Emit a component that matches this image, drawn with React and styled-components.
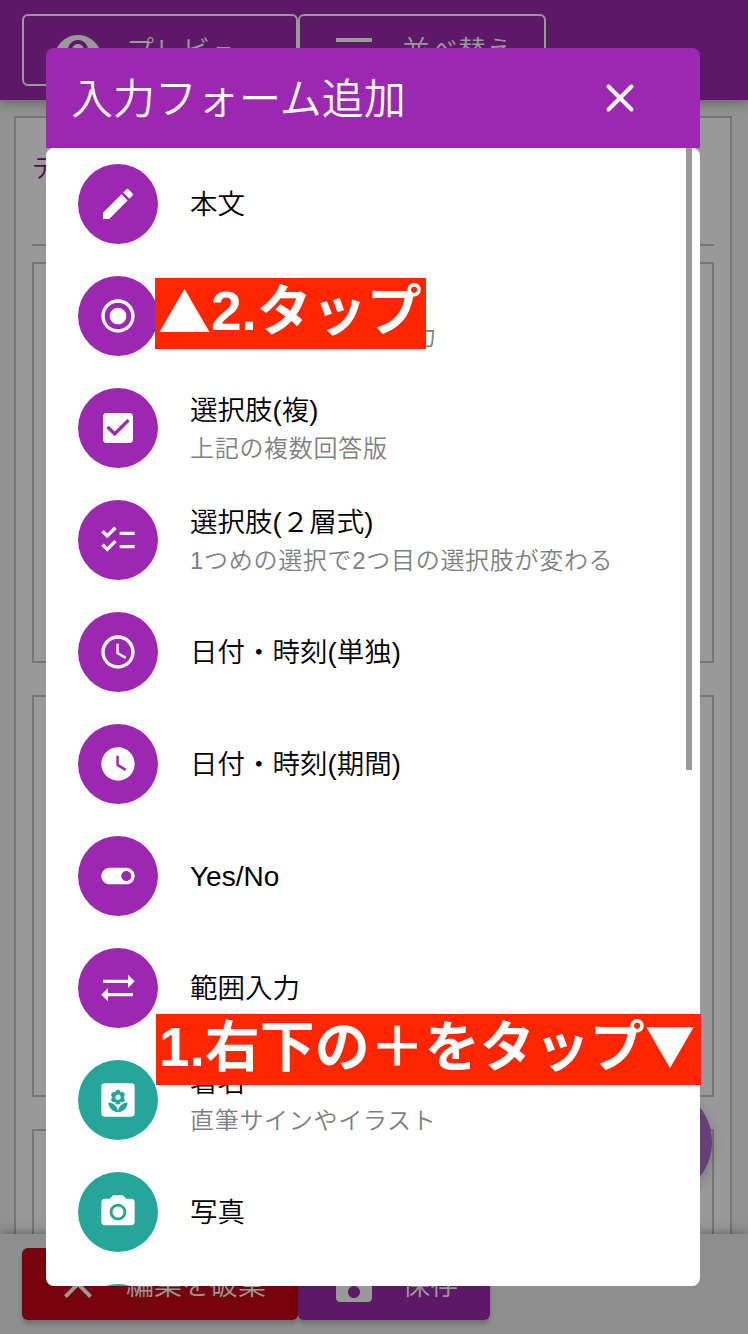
import React from "react";
import styled, { createGlobalStyle } from "styled-components";

const PURPLE = "#9c27b0";
const TEAL = "#26a69a";

const GlobalStyle = createGlobalStyle`
  * { box-sizing: border-box; }
  body {
    margin: 0;
    background: #929292;
    font-family: "Liberation Sans", "Noto Sans CJK JP", sans-serif;
    font-weight: 350;
    -webkit-font-smoothing: antialiased;
  }
`;

const Screen = styled.div`
  position: relative;
  display: flex;
  flex-direction: column;
  width: 748px;
  height: 1334px;
  overflow: hidden;
`;

const TopBar = styled.header`
  display: flex;
  flex: none;
  height: 100px;
  padding: 14px 22px;
  background: #5d1867;
  box-shadow: 0 4px 8px rgba(0, 0, 0, 0.2), 0 2px 18px rgba(0, 0, 0, 0.12);
  z-index: 1;
`;

const BarButton = styled.button`
  display: flex;
  align-items: center;
  gap: 24px;
  width: ${(p) => p.$width}px;
  height: 72px;
  padding: 0 0 0 ${(p) => (p.$outlined ? 30 : 32)}px;
  border: ${(p) => (p.$outlined ? "2px solid #999" : "0")};
  border-radius: 6px;
  background: ${(p) => p.$color || "transparent"};
  box-shadow: ${(p) => (p.$outlined ? "none" : "0 4px 4px rgba(0, 0, 0, 0.2)")};
  color: #999;
  font: inherit;
  font-size: 28px;
  white-space: nowrap;

  svg {
    flex: none;
    width: 48px;
    height: 48px;
    fill: currentColor;
  }
`;

const BarLabel = styled.span`
  padding-bottom: 2px;
`;

const Page = styled.main`
  flex: 1;
  min-height: 0;
  padding: 16px 16px 0 14px;
  overflow: hidden;
`;

const Paper = styled.section`
  display: flex;
  flex-direction: column;
  height: 1300px;
  padding: 0 16px;
  border: 2px solid #767676;
  background: #999;
`;

const PageTitle = styled.div`
  flex: none;
  height: 128px;
  margin-bottom: 16px;
  padding: 30px 0 0;
  border-bottom: 2px solid #767676;
  color: #49104f;
  font-size: 25px;
`;

const Card = styled.div`
  flex: none;
  height: 401.4px;
  margin-bottom: 32px;
  border: 2px solid #767676;
`;

const BottomBar = styled.footer`
  display: flex;
  flex: none;
  height: 100px;
  padding: 14px 22px;
  background: #8e8e8e;
  box-shadow: 0 -2px 8px rgba(0, 0, 0, 0.24), 0 -6px 16px rgba(0, 0, 0, 0.06);
  z-index: 1;
`;

const Fab = styled.div`
  position: absolute;
  left: 600px;
  top: 1086px;
  width: 112px;
  height: 112px;
  border-radius: 50%;
  background: #683f79;
  box-shadow: 0 4px 12px rgba(0, 0, 0, 0.22);
`;

const Dialog = styled.div`
  position: absolute;
  z-index: 2;
  left: 46px;
  top: 48px;
  display: flex;
  flex-direction: column;
  width: 654px;
  height: 1238px;
`;

const DialogHeader = styled.div`
  display: flex;
  flex: none;
  align-items: center;
  justify-content: space-between;
  height: 100px;
  padding: 0 60px 0 25px;
  border-radius: 8px 8px 0 0;
  background: ${PURPLE};
  color: #fff;
`;

const DialogTitle = styled.h1`
  margin: 0;
  padding-top: 3px;
  font-size: 42px;
  font-weight: 350;
  line-height: 60px;
`;

const CloseIcon = styled.svg`
  width: 40px;
  height: 40px;
  fill: none;
  stroke: #fff;
  stroke-width: 4;
  stroke-linecap: round;
`;

const DialogBody = styled.div`
  display: flex;
  flex: 1;
  min-height: 0;
  justify-content: space-between;
  overflow: hidden;
  border-radius: 8px;
  background: #fff;
`;

const List = styled.ul`
  flex: 1;
  margin: 0;
  padding: 0;
  list-style: none;
`;

const ScrollThumb = styled.div`
  width: 6px;
  height: 622px;
  margin-right: 8px;
  background: #999;
`;

const Row = styled.li`
  display: flex;
  align-items: center;
  gap: 32px;
  height: 112px;
  padding-left: 32px;
`;

const Avatar = styled.span`
  display: flex;
  flex: none;
  align-items: center;
  justify-content: center;
  width: 80px;
  height: 80px;
  border-radius: 50%;
  background: ${(p) => p.$color};

  svg {
    width: 40px;
    height: 40px;
    fill: #fff;
  }
`;

const RowText = styled.div`
  display: flex;
  flex-direction: column;
  padding-top: 2px;
  white-space: nowrap;
`;

const Primary = styled.span`
  color: #000;
  font-size: ${(p) => (p.$latin ? 28 : 27.5)}px;
  line-height: 40px;
`;

const Secondary = styled.span`
  color: #808080;
  font-size: 24px;
  letter-spacing: 0.7px;
  line-height: 36px;
`;

const Callout = styled.div`
  position: absolute;
  z-index: 3;
  left: ${(p) => p.$x}px;
  top: ${(p) => p.$y}px;
  width: ${(p) => p.$width}px;
  height: 71px;
  padding-left: ${(p) => p.$inset}px;
  overflow: hidden;
  background: #ff2600;
  color: #fff;
  font-size: 55px;
  font-weight: 700;
  line-height: 67px;
  white-space: nowrap;
`;

const Triangle = styled.span`
  font-family: "Noto Sans CJK JP", sans-serif;
  font-size: ${(p) => p.$size}px;
  line-height: 1;
  vertical-align: ${(p) => p.$shift || 0}px;
`;

const ICONS = {
  edit: "M3 17.25V21h3.75L17.81 9.94l-3.75-3.75L3 17.25zM20.71 7.04c.39-.39.39-1.02 0-1.41l-2.34-2.34c-.39-.39-1.02-.39-1.41 0l-1.83 1.83 3.75 3.75 1.83-1.83z",
  radio: "M12 7c-2.76 0-5 2.24-5 5s2.24 5 5 5 5-2.24 5-5-2.24-5-5-5zm0-5C6.48 2 2 6.48 2 12s4.48 10 10 10 10-4.48 10-10S17.52 2 12 2zm0 18c-4.42 0-8-3.58-8-8s3.58-8 8-8 8 3.58 8 8-3.58 8-8 8z",
  checkbox: "M19 3H5c-1.11 0-2 .9-2 2v14c0 1.1.89 2 2 2h14c1.11 0 2-.9 2-2V5c0-1.1-.89-2-2-2zm-9 14l-5-5 1.41-1.41L10 14.17l7.59-7.59L19 8l-9 9z",
  checklist: "M22 7h-9v2h9V7zm0 8h-9v2h9v-2zM5.54 11L2 7.46l1.41-1.41 2.12 2.12 4.24-4.24 1.41 1.41L5.54 11zm0 8L2 15.46l1.41-1.41 2.12 2.12 4.24-4.24 1.41 1.41L5.54 19z",
  clock: "M11.99 2C6.47 2 2 6.48 2 12s4.47 10 9.99 10C17.52 22 22 17.52 22 12S17.52 2 11.99 2zM12 20c-4.42 0-8-3.58-8-8s3.58-8 8-8 8 3.58 8 8-3.58 8-8 8zm.5-13H11v6l5.25 3.15.75-1.23-4.5-2.67z",
  clockFilled: "M12 2C6.5 2 2 6.5 2 12s4.5 10 10 10 10-4.5 10-10S17.5 2 12 2zm4.2 14.2L11 13V7h1.5v5.2l4.5 2.7-.8 1.3z",
  toggle: "M17 7H7c-2.76 0-5 2.24-5 5s2.24 5 5 5h10c2.76 0 5-2.24 5-5s-2.24-5-5-5zm0 8c-1.66 0-3-1.34-3-3s1.34-3 3-3 3 1.34 3 3-1.34 3-3 3z",
  arrows: "M22 8l-4-4v3H3v2h15v3l4-4zM2 16l4 4v-3h15v-2H6v-3l-4 4z",
  florist: "M12 22c4.97 0 9-4.03 9-9-4.97 0-9 4.03-9 9zM5.6 10.25c0 1.38 1.12 2.5 2.5 2.5.53 0 1.01-.16 1.42-.44l-.02.19c0 1.38 1.12 2.5 2.5 2.5s2.5-1.12 2.5-2.5l-.02-.19c.4.28.89.44 1.42.44 1.38 0 2.5-1.12 2.5-2.5 0-1-.59-1.85-1.43-2.25.84-.4 1.43-1.25 1.43-2.25 0-1.38-1.12-2.5-2.5-2.5-.53 0-1.01.16-1.42.44l.02-.19C14.5 2.12 13.38 1 12 1S9.5 2.12 9.5 3.5l.02.19c-.4-.28-.89-.44-1.42-.44-1.38 0-2.5 1.12-2.5 2.5 0 1 .59 1.85 1.43 2.25-.84.4-1.43 1.25-1.43 2.25zM12 5.5c1.38 0 2.5 1.12 2.5 2.5s-1.12 2.5-2.5 2.5S9.5 9.38 9.5 8s1.12-2.5 2.5-2.5zM3 13c0 4.97 4.03 9 9 9 0-4.97-4.03-9-9-9z",
  camera: "M9 2L7.17 4H4c-1.1 0-2 .9-2 2v12c0 1.1.9 2 2 2h16c1.1 0 2-.9 2-2V6c0-1.1-.9-2-2-2h-3.17L15 2H9zm3 15c-2.76 0-5-2.24-5-5s2.24-5 5-5 5 2.24 5 5-2.24 5-5 5z",
  eye: "M12 4.5C7 4.5 2.73 7.61 1 12c1.73 4.39 6 7.5 11 7.5s9.27-3.11 11-7.5c-1.73-4.39-6-7.5-11-7.5zM12 17c-2.76 0-5-2.24-5-5s2.24-5 5-5 5 2.24 5 5-2.24 5-5 5zm0-8c-1.66 0-3 1.34-3 3s1.34 3 3 3 3-1.34 3-3-1.34-3-3-3z",
  menu: "M3 18h18v-2H3v2zm0-5h18v-2H3v2zm0-7v2h18V6H3z",
  close: "M19 6.41L17.59 5 12 10.59 6.41 5 5 6.41 10.59 12 5 17.59 6.41 19 12 13.41 17.59 19 19 17.59 13.41 12z",
  save: "M17 3H5c-1.11 0-2 .9-2 2v14c0 1.1.89 2 2 2h14c1.1 0 2-.9 2-2V7l-4-4zm-5 16c-1.66 0-3-1.34-3-3s1.34-3 3-3 3 1.34 3 3-1.34 3-3 3zm3-10H5V5h10v4z",
};

function Icon({ name }) {
  if (name === "flower") {
    return (
      <svg viewBox="0 0 24 24">
        <rect x="2" y="2" width="20" height="20" rx="2" />
        <path d={ICONS.florist} fill={TEAL} transform="translate(4.32 5.16) scale(0.64)" />
      </svg>
    );
  }
  return (
    <svg viewBox="0 0 24 24">
      <path d={ICONS[name]} />
      {name === "camera" && <circle cx="12" cy="12" r="3.3" />}
    </svg>
  );
}

const ITEMS = [
  { icon: "edit", title: "本文" },
  { icon: "radio", title: "選択肢(単)", note: "選択肢から一つを入力" },
  { icon: "checkbox", title: "選択肢(複)", note: "上記の複数回答版" },
  { icon: "checklist", title: "選択肢(２層式)", note: "1つめの選択で2つ目の選択肢が変わる" },
  { icon: "clock", title: "日付・時刻(単独)" },
  { icon: "clockFilled", title: "日付・時刻(期間)" },
  { icon: "toggle", title: "Yes/No", latin: true },
  { icon: "arrows", title: "範囲入力" },
  { icon: "flower", title: "署名", note: "直筆サインやイラスト", color: TEAL },
  { icon: "camera", title: "写真", color: TEAL },
  { icon: "edit", title: "", color: TEAL },
];

export default function App() {
  return (
    <Screen>
      <GlobalStyle />
      <TopBar>
        <BarButton $outlined $width={276}>
          <Icon name="eye" />
          <BarLabel>プレビュー</BarLabel>
        </BarButton>
        <BarButton $outlined $width={248}>
          <Icon name="menu" />
          <BarLabel>並べ替え</BarLabel>
        </BarButton>
      </TopBar>
      <Page>
        <Paper>
          <PageTitle>デザイン</PageTitle>
          <Card />
          <Card />
          <Card />
        </Paper>
      </Page>
      <Fab />
      <BottomBar>
        <BarButton $width={276} $color="#76020d">
          <Icon name="close" />
          <BarLabel>編集を破棄</BarLabel>
        </BarButton>
        <BarButton $width={192} $color="#5d1867">
          <Icon name="save" />
          <BarLabel>保存</BarLabel>
        </BarButton>
      </BottomBar>

      <Dialog role="dialog">
        <DialogHeader>
          <DialogTitle>入力フォーム追加</DialogTitle>
          <CloseIcon viewBox="0 0 40 40">
            <path d="M8.5 8.5l23 23M31.5 8.5l-23 23" />
          </CloseIcon>
        </DialogHeader>
        <DialogBody>
          <List>
            {ITEMS.map((item, i) => (
              <Row key={i}>
                <Avatar $color={item.color || PURPLE}>
                  <Icon name={item.icon} />
                </Avatar>
                <RowText>
                  <Primary $latin={item.latin}>{item.title}</Primary>
                  {item.note && <Secondary>{item.note}</Secondary>}
                </RowText>
              </Row>
            ))}
          </List>
          <ScrollThumb />
        </DialogBody>
      </Dialog>

      <Callout $x={155} $y={278} $width={271} $inset={3}>
        <Triangle $size={53} $shift={-3}>▲</Triangle>2.タップ
      </Callout>
      <Callout $x={156} $y={1014} $width={545} $inset={3}>
        1.右下の＋をタップ<Triangle $size={50} $shift={1}>▼</Triangle>
      </Callout>
    </Screen>
  );
}
